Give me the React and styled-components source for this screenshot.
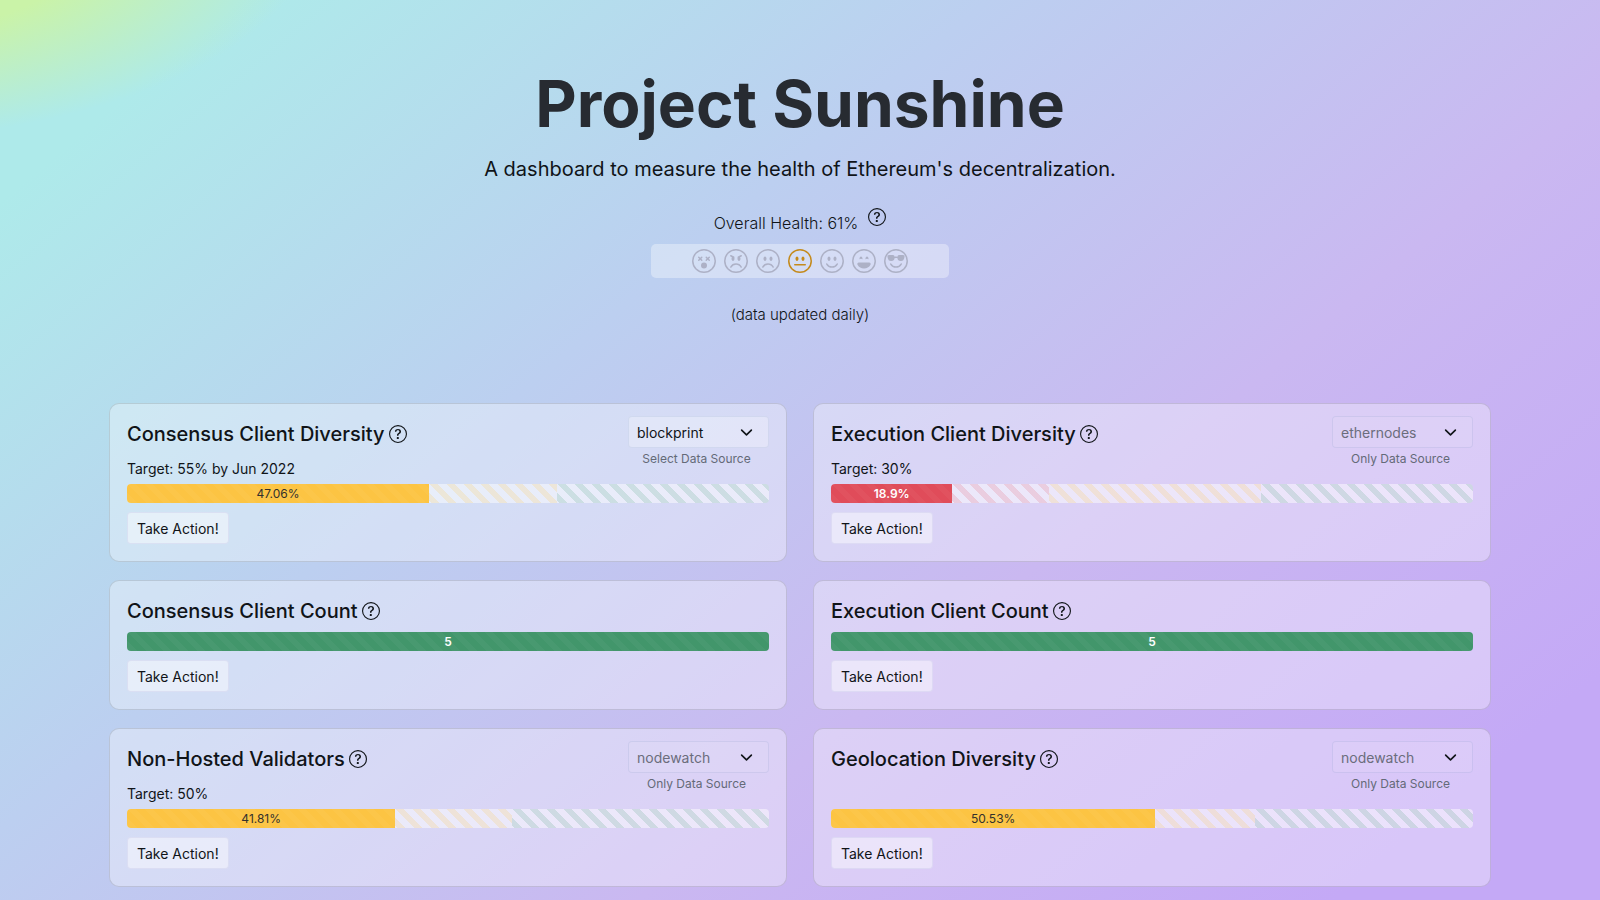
import React, { useId } from "react";
import styled, { createGlobalStyle, css } from "styled-components";
import {
  BsEmojiAngry,
  BsEmojiDizzy,
  BsEmojiFrown,
  BsEmojiLaughing,
  BsEmojiNeutral,
  BsEmojiSmile,
  BsEmojiSunglasses,
  BsQuestionCircle,
} from "react-icons/bs";

const GlobalStyle = createGlobalStyle`
  *, *::before, *::after { box-sizing: border-box; }
  body {
    margin: 0;
    min-height: 100vh;
    color: #101418;
    font-family: Inter, "Liberation Sans", sans-serif;
    font-size: 14px;
    background:
      radial-gradient(ellipse 470px 220px at -150px -80px, #caf3a8 54%, rgba(202, 243, 168, 0) 100%),
      linear-gradient(140deg, #aeeaea 9%, #bccff0 37%, #cab8f1 64%, #c4a9f6 90%);
    background-attachment: fixed;
  }
`;

const Page = styled.main`
  max-width: 1382px;
  margin: 0 auto;
  padding: 64px 0 12px;
`;

const Hero = styled.header`
  display: flex;
  flex-direction: column;
  align-items: center;
  text-align: center;
  margin-bottom: 76px;
`;

const Title = styled.h1`
  margin: 0;
  font-size: 64px;
  font-weight: 700;
  line-height: 80px;
  color: #272b31;
`;

const Subtitle = styled.p`
  margin: 8px 0 22px;
  font-size: 20px;
  font-weight: 400;
  line-height: 34px;
`;

const Health = styled.div`
  display: flex;
  gap: 10px;
  margin-bottom: 8px;
`;

const HealthText = styled.span`
  padding-top: 2px;
  font-size: 16px;
  font-weight: 300;
  line-height: 26px;
`;

const HelpButton = styled.button`
  display: inline-flex;
  flex: none;
  width: 18px;
  height: 18px;
  padding: 0;
  border: 0;
  background: none;
  color: inherit;
  font-size: 18px;
  cursor: pointer;
`;

const FaceStrip = styled.div`
  display: flex;
  justify-content: center;
  align-items: center;
  gap: 8px;
  width: 298px;
  height: 34px;
  border-radius: 5px;
  background: rgba(255, 255, 255, 0.35);
  font-size: 24px;
  color: #adb1c6;
`;

const Face = styled.span`
  display: flex;
  color: ${(p) => (p.$active ? "#c48a1c" : "inherit")};
`;

const Updated = styled.p`
  margin: 25px 0 0;
  font-size: 15px;
  font-weight: 300;
  line-height: 24px;
`;

const Grid = styled.section`
  display: grid;
  grid-template-columns: repeat(2, minmax(0, 1fr));
  gap: 18px 26px;
`;

const Card = styled.article`
  padding: 12px 17px 17px;
  border: 1px solid rgba(0, 0, 0, 0.12);
  border-radius: 10px;
  background: rgba(255, 255, 255, 0.34);
`;

const CardHead = styled.div`
  display: flex;
  justify-content: space-between;
  min-height: ${(p) => (p.$tall ? 68 : 39)}px;
`;

const Heading = styled.div`
  display: flex;
  align-items: center;
  gap: 4px;
  padding: 5px 0 8px;
`;

const CardTitle = styled.h2`
  margin: 0;
  font-size: 20px;
  font-weight: 500;
  line-height: 26px;
`;

const Target = styled.p`
  margin: 0;
  line-height: 27px;
`;

const Source = styled.div`
  display: flex;
  flex-direction: column;
  width: 141px;
`;

const SelectWrap = styled.div`
  position: relative;
`;

const Select = styled.select`
  appearance: none;
  display: block;
  width: 100%;
  height: 32px;
  padding: 0 36px 0 8px;
  border: 1px solid rgba(60, 100, 160, 0.1);
  border-radius: 4px;
  background: rgba(255, 255, 255, 0.3);
  color: #101418;
  font: inherit;
  opacity: 1;

  &:disabled {
    background: rgba(255, 255, 255, 0.08);
    color: #6b6d7c;
  }
`;

const Chevron = styled.svg`
  position: absolute;
  right: 16px;
  top: 10px;
  width: 13px;
  height: 13px;
  pointer-events: none;
`;

const SourceLabel = styled.label`
  padding-right: 4px;
  font-size: 12px;
  line-height: 22px;
  text-align: center;
  color: #646a78;
`;

const Track = styled.div`
  display: flex;
  height: 19px;
  border-radius: 4px;
  overflow: hidden;
  background: rgba(255, 255, 255, 0.48);
`;

const fills = { danger: "#e04c5a", warning: "#fcc443", success: "#42966b" };
const tints = {
  danger: "rgba(220, 53, 69, 0.15)",
  warning: "rgba(255, 190, 40, 0.16)",
  success: "rgba(25, 135, 84, 0.14)",
};

const stripes = (color) => css`
  background-image: linear-gradient(
    45deg,
    ${color} 25%,
    transparent 25%,
    transparent 50%,
    ${color} 50%,
    ${color} 75%,
    transparent 75%
  );
  background-size: 17px 17px;
`;

const Segment = styled.div`
  display: flex;
  justify-content: center;
  align-items: center;
  font-size: 12px;
  ${(p) =>
    p.$solid
      ? css`
          background-color: ${fills[p.$tone]};
          color: ${p.$tone === "warning" ? "#33312c" : "#fff"};
          font-weight: ${p.$tone === "warning" ? 400 : 600};
          ${stripes("rgba(255, 255, 255, 0.03)")}
        `
      : stripes(tints[p.$tone])}
`;

const ActionButton = styled.button`
  display: block;
  height: 32px;
  margin-top: 9px;
  padding: 0 9px;
  border: 1px solid rgba(190, 190, 230, 0.3);
  border-radius: 4px;
  background: rgba(255, 255, 255, 0.46);
  color: #101418;
  font: inherit;
  cursor: pointer;
`;

const faces = [
  { Icon: BsEmojiDizzy },
  { Icon: BsEmojiAngry },
  { Icon: BsEmojiFrown },
  { Icon: BsEmojiNeutral, active: true },
  { Icon: BsEmojiSmile },
  { Icon: BsEmojiLaughing },
  { Icon: BsEmojiSunglasses },
];

const metrics = [
  {
    title: "Consensus Client Diversity",
    target: "Target: 55% by Jun 2022",
    source: "blockprint",
    selectable: true,
    value: { label: "47.06%", width: 47.06, tone: "warning" },
    rest: [["warning", 19.94], ["success", 33]],
  },
  {
    title: "Execution Client Diversity",
    target: "Target: 30%",
    source: "ethernodes",
    value: { label: "18.9%", width: 18.9, tone: "danger" },
    rest: [["danger", 15.1], ["warning", 33], ["success", 33]],
  },
  { title: "Consensus Client Count", value: { label: "5", width: 100, tone: "success" }, rest: [] },
  { title: "Execution Client Count", value: { label: "5", width: 100, tone: "success" }, rest: [] },
  {
    title: "Non-Hosted Validators",
    target: "Target: 50%",
    source: "nodewatch",
    value: { label: "41.81%", width: 41.81, tone: "warning" },
    rest: [["warning", 18.19], ["success", 40]],
  },
  {
    title: "Geolocation Diversity",
    source: "nodewatch",
    value: { label: "50.53%", width: 50.53, tone: "warning" },
    rest: [["warning", 15.47], ["success", 34]],
  },
];

function Help({ label }) {
  return (
    <HelpButton type="button" aria-label={label}>
      <BsQuestionCircle />
    </HelpButton>
  );
}

function SourcePicker({ name, selectable }) {
  const id = useId();
  return (
    <Source>
      <SelectWrap>
        <Select id={id} defaultValue={name} disabled={!selectable}>
          <option>{name}</option>
        </Select>
        <Chevron viewBox="0 0 16 16" aria-hidden="true">
          <path d="M2 5l6 6 6-6" fill="none" stroke="#101418" strokeWidth="2" strokeLinecap="round" strokeLinejoin="round" />
        </Chevron>
      </SelectWrap>
      <SourceLabel htmlFor={id}>{selectable ? "Select Data Source" : "Only Data Source"}</SourceLabel>
    </Source>
  );
}

function MetricCard({ title, target, source, selectable, value, rest }) {
  return (
    <Card>
      <CardHead $tall={Boolean(source)}>
        <div>
          <Heading>
            <CardTitle>{title}</CardTitle>
            <Help label={`About ${title}`} />
          </Heading>
          {target && <Target>{target}</Target>}
        </div>
        {source && <SourcePicker name={source} selectable={selectable} />}
      </CardHead>
      <Track>
        <Segment $solid $tone={value.tone} style={{ width: `${value.width}%` }}>
          {value.label}
        </Segment>
        {rest.map(([tone, width], i) => (
          <Segment key={i} $tone={tone} style={{ width: `${width}%` }} />
        ))}
      </Track>
      <ActionButton type="button">Take Action!</ActionButton>
    </Card>
  );
}

export default function App() {
  return (
    <>
      <GlobalStyle />
      <Page>
        <Hero>
          <Title>Project Sunshine</Title>
          <Subtitle>A dashboard to measure the health of Ethereum's decentralization.</Subtitle>
          <Health>
            <HealthText>Overall Health: 61%</HealthText>
            <Help label="About overall health" />
          </Health>
          <FaceStrip>
            {faces.map(({ Icon, active }, i) => (
              <Face key={i} $active={active}>
                <Icon />
              </Face>
            ))}
          </FaceStrip>
          <Updated>(data updated daily)</Updated>
        </Hero>
        <Grid>
          {metrics.map((m) => (
            <MetricCard key={m.title} {...m} />
          ))}
        </Grid>
      </Page>
    </>
  );
}
